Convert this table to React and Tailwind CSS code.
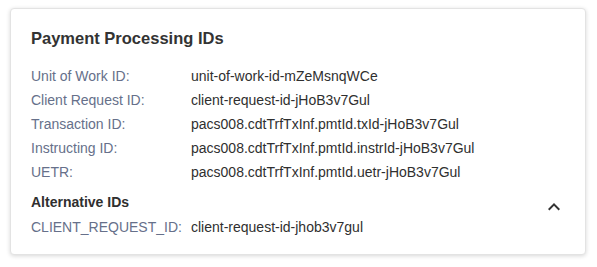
import React from 'react';

const mainIds = [
    { label: 'Unit of Work ID:', value: 'unit-of-work-id-mZeMsnqWCe' },
    { label: 'Client Request ID:', value: 'client-request-id-jHoB3v7Gul' },
    { label: 'Transaction ID:', value: 'pacs008.cdtTrfTxInf.pmtId.txId-jHoB3v7Gul' },
    { label: 'Instructing ID:', value: 'pacs008.cdtTrfTxInf.pmtId.instrId-jHoB3v7Gul' },
    { label: 'UETR:', value: 'pacs008.cdtTrfTxInf.pmtId.uetr-jHoB3v7Gul' }
];

const IdRow = ({ label, value }) => (
    <div className="grid grid-cols-[160px_1fr] h-6 items-center">
        <span className="text-[#66708a]">{label}</span>
        <span className="text-[#2f2f2f]">{value}</span>
    </div>
);

const App = () => {
    return (
        <div className="w-[597px] h-[267px] bg-white pt-2 pl-[10px] font-['Liberation_Sans',Arial,sans-serif]">
            <div className="w-[576px] h-[247px] bg-white rounded border border-[#e3e3e3] shadow-[0_1px_4px_rgba(0,0,0,0.16)] pt-[17px] pl-5 pr-6">
                <h2 className="text-[16.5px] font-bold text-[#333] leading-6 mb-[14px]">Payment Processing IDs</h2>

                {/* Main ids */}
                <div className="text-[14px]">
                    {mainIds.map((row) => (
                        <IdRow key={row.label} label={row.label} value={row.value} />
                    ))}
                </div>

                {/* Alternative ids */}
                <div className="mt-[6px] h-6 flex items-center justify-between">
                    <h3 className="text-[14px] font-bold text-[#2f2f2f] leading-6">Alternative IDs</h3>
                    <svg className="w-6 h-6 text-[#333] translate-y-[5px] -mr-[5px]" viewBox="0 0 24 24" fill="currentColor">
                        <path d="M7.41 15.41 12 10.83l4.59 4.58L18 14l-6-6-6 6z" />
                    </svg>
                </div>
                <div className="mt-px grid grid-cols-[160px_1fr] h-6 items-center text-[14px]">
                    <span className="text-[#66708a]">CLIENT_REQUEST_ID:</span>
                    <span className="text-[#2f2f2f]">client-request-id-jhob3v7gul</span>
                </div>
            </div>
        </div>
    );
};

export default App;
